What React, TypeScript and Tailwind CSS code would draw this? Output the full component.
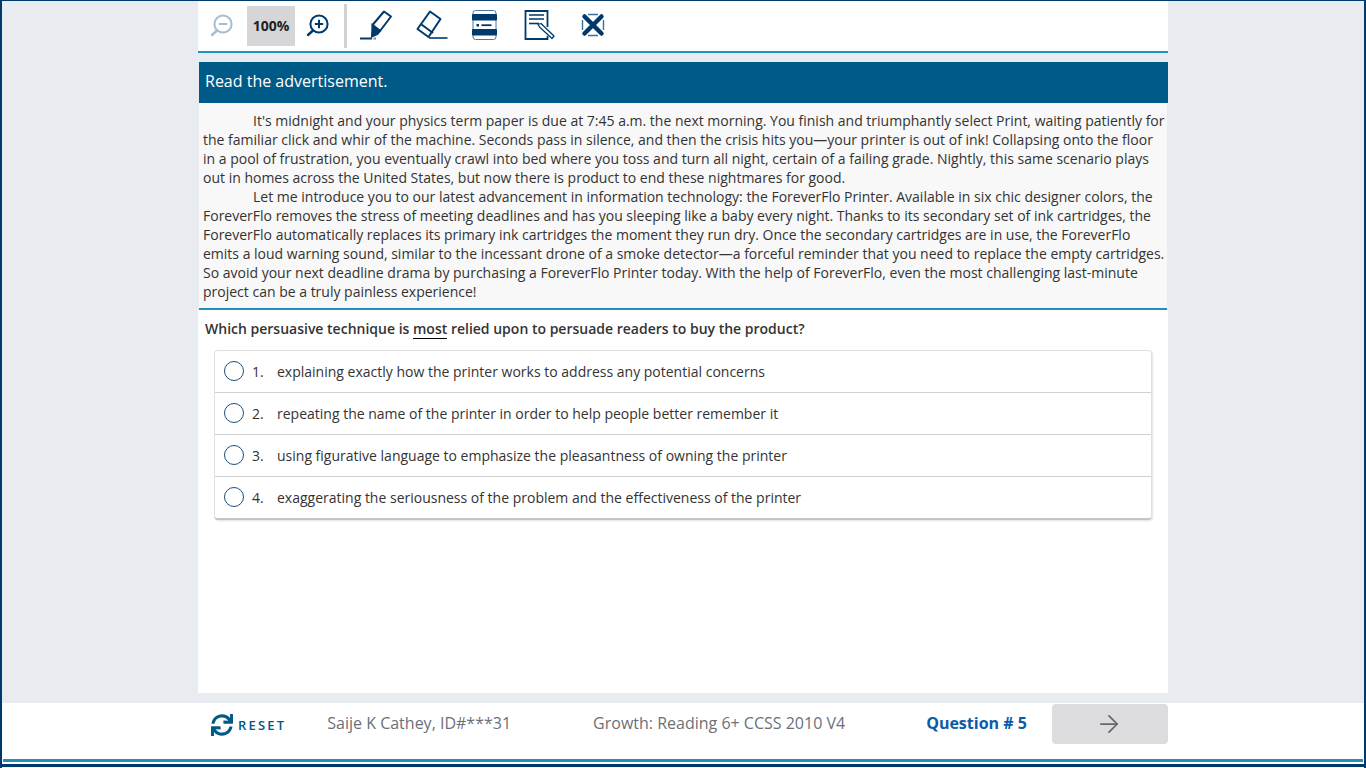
import { ArrowRight } from "lucide-react";
import { FaSync } from "react-icons/fa";

const NAVY = "#003a6c";

const OPTIONS = [
  "explaining exactly how the printer works to address any potential concerns",
  "repeating the name of the printer in order to help people better remember it",
  "using figurative language to emphasize the pleasantness of owning the printer",
  "exaggerating the seriousness of the problem and the effectiveness of the printer",
];

// ── Toolbar icons, viewBox uses page coordinates so they are easy to compare ──
function ZoomIcon({ plus, color }: { plus?: boolean; color: string }) {
  return (
    <svg width="24" height="24" viewBox="0 0 24 24" fill="none" stroke={color} strokeWidth="2">
      <circle cx="13" cy="10" r="8.6" />
      <path d="M7 16.5 L2 21" strokeWidth="2.4" strokeLinecap="round" />
      <path d="M8.8 10 H17.2" />
      {plus && <path d="M13 5.8 V14.2" />}
    </svg>
  );
}

function PenIcon() {
  return (
    <svg width="34" height="34" viewBox="359 9 34 34" fill="none" stroke={NAVY} strokeWidth="2" className="ml-3">
      <path d="M384 11.5 L391 16.5 L380 31 L372.5 25 Z" strokeLinejoin="round" />
      <path d="M372.5 25 L380 31 L377.5 34 L372 36.5 Z" fill={NAVY} />
      <path d="M360 38.5 H372" />
      <path d="M373.5 38.5 H376" stroke="#6f8fab" />
    </svg>
  );
}

function EraserIcon() {
  return (
    <svg width="32" height="32" viewBox="416 10 32 32" fill="none" stroke={NAVY} strokeWidth="2">
      <path d="M430 11.5 L440.5 19 L428.5 37 L417.5 29 Z" strokeLinejoin="round" />
      <path d="M421.5 24.5 L433 33" />
      <path d="M429 38 H447.5" stroke="#2f5f8a" />
    </svg>
  );
}

function MaskIcon() {
  return (
    <svg width="27" height="32" viewBox="471 10 27 32" fill="none">
      <rect x="473" y="10.5" width="23" height="29" rx="2.5" stroke="#4f7a9e" strokeWidth="1" />
      <rect x="472" y="14" width="25" height="6.5" rx="1" fill={NAVY} />
      <rect x="472" y="29" width="25" height="6.5" rx="1" fill={NAVY} />
      <rect x="476.5" y="24" width="2.5" height="2.5" fill={NAVY} />
      <rect x="481.5" y="24.3" width="10" height="1.8" fill={NAVY} />
    </svg>
  );
}

function NotesIcon() {
  return (
    <svg width="32" height="32" viewBox="524 10 32 32" fill="none" stroke={NAVY}>
      <path d="M547.5 27 V11 H525.5 V39 H547.5 V36" strokeWidth="1.8" />
      <path d="M529 15 H544 M529 19 H544" strokeWidth="1.6" />
      <path d="M529 23.5 H539" strokeWidth="1.6" />
      <path d="M538 24.5 L541 23.5 L554 36 L552 38.5 L539.5 27 Z" strokeWidth="1.3" fill="#fff" strokeLinejoin="round" />
    </svg>
  );
}

function EliminateIcon() {
  return (
    <svg width="26" height="26" viewBox="580 13 26 26" fill="none" stroke={NAVY}>
      <path d="M584.5 16.5 L601.5 33.5 M601.5 16.5 L584.5 33.5" strokeWidth="4.5" strokeLinecap="round" />
      <path d="M588 14.5 H598 M588 35.5 H598 M582.5 20 V30 M603.5 20 V30" strokeWidth="1.4" stroke="#3f6f98" />
    </svg>
  );
}

function Toolbar() {
  return (
    <div className="flex h-[50px] items-center bg-white pb-px pl-3 pt-px">
      <ZoomIcon color="#a8bdcf" />
      <div className="ml-[13px] flex h-10 w-12 items-center justify-center bg-[#d6d6d8] text-sm font-bold text-[#222]">100%</div>
      <div className="ml-[11px]"><ZoomIcon plus color={NAVY} /></div>
      <div className="ml-[14px] h-11 w-[3px] bg-[#d2d2d2]" />
      <PenIcon />
      <div className="ml-[23px] flex items-center gap-[23px]">
        <EraserIcon />
        <MaskIcon />
        <div className="ml-[3px] flex items-center gap-6">
          <NotesIcon />
          <EliminateIcon />
        </div>
      </div>
    </div>
  );
}

export default function App() {
  return (
    <div
      className="flex h-[768px] w-[1366px] flex-col overflow-hidden border-x-2 border-t border-[#003a6c] bg-[#e8ebf0] text-sm text-[#333]"
      style={{ fontFamily: '"Open Sans", sans-serif' }}
    >
      <div className="mx-auto flex w-[970px] flex-1 flex-col">
        <Toolbar />
        <div className="h-0.5 bg-[#2190bd]" />

        {/* Header bar */}
        <div className="ml-px mt-[9px] flex h-[41px] items-center bg-[#005a87] pb-1 pl-[6px] pr-1 text-base text-white">
          Read the advertisement.
        </div>

        {/* Passage */}
        <div className="ml-px mr-px border-b-2 border-[#2190bd] bg-[#f8f8f8] pb-[7px] pl-1 pr-px pt-2 leading-[19px]">
          <p className="indent-[50px]">
            It's midnight and your physics term paper is due at 7:45 a.m. the next morning. You finish and triumphantly select Print, waiting patiently for the familiar click and whir of the machine. Seconds pass in silence, and then the crisis hits you—your printer is out of ink! Collapsing onto the floor in a pool of frustration, you eventually crawl into bed where you toss and turn all night, certain of a failing grade. Nightly, this same scenario plays out in homes across the United States, but now there is product to end these nightmares for good.
          </p>
          <p className="indent-[50px]">
            Let me introduce you to our latest advancement in information technology: the ForeverFlo Printer. Available in six chic designer colors, the ForeverFlo removes the stress of meeting deadlines and has you sleeping like a baby every night. Thanks to its secondary set of ink cartridges, the ForeverFlo automatically replaces its primary ink cartridges the moment they run dry. Once the secondary cartridges are in use, the ForeverFlo emits a loud warning sound, similar to the incessant drone of a smoke detector—a forceful reminder that you need to replace the empty cartridges. So avoid your next deadline drama by purchasing a ForeverFlo Printer today. With the help of ForeverFlo, even the most challenging last-minute project can be a truly painless experience!
          </p>
        </div>

        {/* Question and answers */}
        <div className="flex-1 bg-white">
          <p className="pl-[7px] pt-[9px] font-semibold leading-[19px]">
            Which persuasive technique is <span className="border-b border-black">most</span> relied upon to persuade readers to buy the product?
          </p>
          <div className="ml-4 mt-3 w-[938px] rounded-sm border border-b-2 border-[#e0e0e0] border-b-[#c4c4c4] shadow-[1px_1px_2px_rgba(0,0,0,0.12)]">
            {OPTIONS.map((text, i) => (
              <div key={text} className={`flex items-center pb-px ${i > 0 ? "h-[42px] border-t border-[#d0d0d0]" : "h-[41px]"}`}>
                <span className="ml-[9px] h-5 w-5 rounded-full border-[1.5px] border-[#1f4e79] bg-white" />
                <span className="ml-2 mt-0.5 w-[25px]">{i + 1}.</span>
                <span className="mt-0.5">{text}</span>
              </div>
            ))}
          </div>
        </div>
      </div>

      {/* Footer */}
      <div className="mt-2.5 h-[56px] bg-white">
        <div className="mx-auto flex h-full w-[970px] items-start">
          <div className="ml-[13px] mt-[11px] flex items-center">
            <FaSync size={22} color="#005a87" />
            <span className="ml-[5px] text-[13px] font-semibold tracking-[2.2px] text-[#005a87]">RESET</span>
          </div>
          <span className="ml-[41px] mt-2 text-base leading-6 text-[#6b7078]">Saije K Cathey, ID#***31</span>
          <span className="ml-[82px] mt-2 text-base leading-6 text-[#6b7078]">Growth: Reading 6+ CCSS 2010 V4</span>
          <span className="ml-[81px] mt-2 text-base font-bold leading-6 text-[#0a5ca8]">Question # 5</span>
          <button className="ml-auto mt-px flex h-10 w-[116px] items-center justify-center rounded bg-[#dcdcde] pr-0.5 text-[#66676b]">
            <ArrowRight size={28} strokeWidth={1.5} />
          </button>
        </div>
      </div>

      {/* Bottom rules */}
      <div className="bg-white px-px pb-0.5">
        <div className="h-[3px] bg-[#2190bd]" />
      </div>
      <div className="h-[3px] bg-[#003a6c]" />
      <div className="h-px bg-white" />
    </div>
  );
}
